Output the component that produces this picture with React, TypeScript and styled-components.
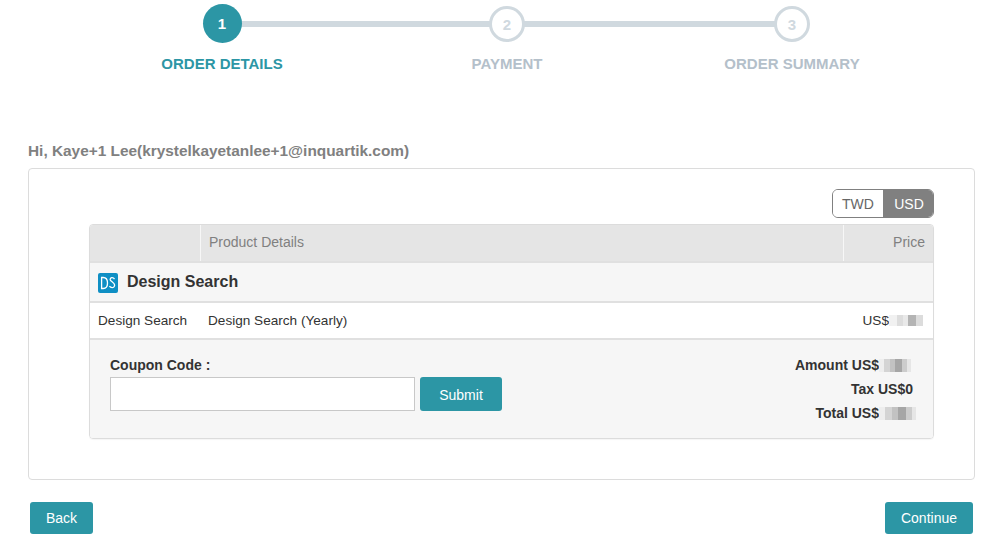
import React from "react";
import styled, { createGlobalStyle } from "styled-components";

const steps = ["ORDER DETAILS", "PAYMENT", "ORDER SUMMARY"];

const App: React.FC = () => {
  return (
    <Root>
      <GlobalStyle />
      <Stepper>
        {steps.map((name, index) => (
          <Step key={name} $last={index === steps.length - 1}>
            <CircleSlot>
              <Circle $active={index === 0}>{index + 1}</Circle>
            </CircleSlot>
            <StepName $active={index === 0}>{name}</StepName>
          </Step>
        ))}
      </Stepper>
      <Greeting>Hi, Kaye+1 Lee(krystelkayetanlee+1@inquartik.com)</Greeting>
      <Card>
        <CurrencyRow>
          <Currency>
            <CurrencyOption>TWD</CurrencyOption>
            <CurrencyOption $selected>USD</CurrencyOption>
          </Currency>
        </CurrencyRow>
        <Table>
          <HeadRow>
            <HeadCell $width={110} />
            <HeadCell $grow>Product Details</HeadCell>
            <HeadCell $width={90} $right>
              Price
            </HeadCell>
          </HeadRow>
          <ProductRow>
            <DsLogo viewBox="0 0 20 20">
              <rect width="20" height="20" rx="2" fill="#0f8fc4" />
              <path
                d="M3.600 4.500v11h1.600c3 0 4.300-2.400 4.300-5.500s-1.300-5.500-4.300-5.500z"
                fill="none"
                stroke="#fff"
                strokeWidth="1.300"
              />
              <path
                d="M16.500 6.200c-.6-1-1.500-1.600-2.600-1.500-1.200.1-1.900 1-1.700 2.100.3 1.500 4.300 3 4.400 5.200.1 1.600-1 2.600-2.500 2.600-1.100 0-2-.5-2.700-1.400"
                fill="none"
                stroke="#fff"
                strokeWidth="1.300"
              />
            </DsLogo>
            <ProductTitle>Design Search</ProductTitle>
          </ProductRow>
          <ItemRow>
            <ItemName>Design Search</ItemName>
            <ItemPlan>Design Search (Yearly)</ItemPlan>
            <ItemPrice>
              US$
              <Blur $width={34} />
            </ItemPrice>
          </ItemRow>
          <Footer>
            <Coupon>
              <CouponLabel>Coupon Code :</CouponLabel>
              <CouponForm>
                <CouponInput />
                <SubmitButton>Submit</SubmitButton>
              </CouponForm>
            </Coupon>
            <Totals>
              <TotalLine $shift={22}>
                Amount US$
                <Blur $width={32} $dark />
              </TotalLine>
              <TotalLine $shift={20}>Tax US$0</TotalLine>
              <TotalLine $shift={17}>
                Total US$
                <Blur $width={37} $dark />
              </TotalLine>
            </Totals>
          </Footer>
        </Table>
      </Card>
      <Actions>
        <ActionButton $width={63}>Back</ActionButton>
        <ActionButton $width={88}>Continue</ActionButton>
      </Actions>
    </Root>
  );
};

export default App;

const GlobalStyle = createGlobalStyle`
  html, body {
    margin: 0;
    padding: 0;
    background: #fff;
    font-family: "Liberation Sans", Arial, sans-serif;
  }
  * {
    box-sizing: border-box;
  }
`;

const Root = styled.div`
  width: 995px;
  height: 548px;
  overflow: hidden;
  padding-left: 28px;
  padding-top: 4px;
`;

const Stepper = styled.div`
  display: flex;
  margin-left: 51.5px;
  width: 855px;
`;

const Step = styled.div<{ $last?: boolean }>`
  position: relative;
  width: 285px;
  display: flex;
  flex-direction: column;
  align-items: center;

  &::after {
    content: "";
    display: ${({ $last }) => ($last ? "none" : "block")};
    position: absolute;
    left: 50%;
    width: 100%;
    top: 17px;
    height: 6px;
    background: #d0d9df;
  }
`;

const CircleSlot = styled.div`
  height: 40px;
  display: flex;
  align-items: center;
  position: relative;
  z-index: 1;
`;

const Circle = styled.div<{ $active?: boolean }>`
  width: ${({ $active }) => ($active ? "39px" : "36px")};
  height: ${({ $active }) => ($active ? "39px" : "36px")};
  margin-top: ${({ $active }) => ($active ? "-1px" : "0")};
  border-radius: 50%;
  display: flex;
  align-items: center;
  justify-content: center;
  font-size: 15px;
  font-weight: 700;
  color: ${({ $active }) => ($active ? "#fff" : "#d0d9df")};
  background: ${({ $active }) => ($active ? "#2c96a5" : "#fff")};
  border: ${({ $active }) => ($active ? "none" : "3px solid #d0d9df")};
`;

const StepName = styled.div<{ $active?: boolean }>`
  margin-top: 11px;
  font-size: 15px;
  line-height: 18px;
  font-weight: 700;
  white-space: nowrap;
  color: ${({ $active }) => ($active ? "#2c96a5" : "#b4c0ca")};
`;

const Greeting = styled.div`
  margin-top: 69px;
  font-size: 15.4px;
  line-height: 18px;
  font-weight: 700;
  color: #808080;
`;

const Card = styled.div`
  margin-top: 8px;
  width: 947px;
  height: 312px;
  padding: 20px 40px 0 60px;
  border: 1px solid #dcdcdc;
  border-radius: 4px;
`;

const CurrencyRow = styled.div`
  display: flex;
  justify-content: flex-end;
`;

const Currency = styled.div`
  display: flex;
  height: 29px;
  border: 1px solid #808080;
  border-radius: 6px;
  overflow: hidden;
`;

const CurrencyOption = styled.div<{ $selected?: boolean }>`
  width: 50px;
  display: flex;
  align-items: center;
  justify-content: center;
  padding-left: ${({ $selected }) => ($selected ? "2px" : "0")};
  font-size: 14px;
  color: ${({ $selected }) => ($selected ? "#fff" : "#666")};
  background: ${({ $selected }) => ($selected ? "#808080" : "#fff")};
`;

const Table = styled.div`
  margin-top: 6px;
  width: 845px;
  border: 1px solid #dcdcdc;
  border-radius: 4px;
  overflow: hidden;
  box-shadow: 0 1px 1px rgba(0, 0, 0, 0.04);
`;

const HeadRow = styled.div`
  display: flex;
  height: 36px;
  background: #e5e5e5;
`;

const HeadCell = styled.div<{ $width?: number; $grow?: boolean; $right?: boolean }>`
  width: ${({ $width }) => ($width ? `${$width}px` : "auto")};
  flex: ${({ $grow }) => ($grow ? 1 : "none")};
  display: flex;
  align-items: center;
  justify-content: ${({ $right }) => ($right ? "flex-end" : "flex-start")};
  padding: 0 8px 2px;
  font-size: 14px;
  color: #808080;
  border-left: ${({ $width, $right }) => ($width && !$right ? "none" : "1px solid #f7f7f7")};
`;

const ProductRow = styled.div`
  display: flex;
  align-items: center;
  gap: 9px;
  height: 42px;
  padding-left: 8px;
  background: #f6f6f6;
  border-top: 2px solid #e0e0e0;
  border-bottom: 2px solid #e0e0e0;
`;

const DsLogo = styled.svg`
  width: 20px;
  height: 20px;
  flex: none;
  margin-top: 2px;
`;

const ProductTitle = styled.div`
  font-size: 16px;
  font-weight: 700;
  color: #333;
`;

const ItemRow = styled.div`
  display: flex;
  align-items: center;
  height: 35px;
  padding: 0 10px 0 8px;
  background: #fff;
  font-size: 13.6px;
  line-height: 16px;
  color: #333;
`;

const ItemName = styled.div`
  width: 110px;
`;

const ItemPlan = styled.div`
  flex: 1;
`;

const ItemPrice = styled.div`
  display: flex;
  align-items: center;
`;

// pixelated patch that hides a price in the screenshot
const Blur = styled.span<{ $width: number; $dark?: boolean }>`
  display: inline-block;
  width: ${({ $width }) => $width}px;
  height: ${({ $dark }) => ($dark ? "13px" : "11px")};
  background: ${({ $dark }) =>
    $dark
      ? "linear-gradient(90deg, #eeeeee 0 16%, #d4d4d4 16% 34%, #c2c2c2 34% 50%, #a6a6a6 50% 72%, #cccccc 72% 88%, #e6e6e6 88% 100%)"
      : "linear-gradient(90deg, #f1f1f1 0 25%, #dddddd 25% 40%, #e9e9e9 40% 55%, #b4b4b4 55% 80%, #dcdcdc 80% 100%)"};
`;

const Footer = styled.div`
  display: flex;
  justify-content: space-between;
  height: 100px;
  padding: 17px 0 0 20px;
  background: #f6f6f6;
  border-top: 2px solid #e0e0e0;
`;

const Coupon = styled.div`
  display: flex;
  flex-direction: column;
`;

const CouponLabel = styled.div`
  font-size: 14px;
  line-height: 16px;
  font-weight: 700;
  color: #333;
`;

const CouponForm = styled.div`
  display: flex;
  gap: 5px;
  margin-top: 4px;
`;

const CouponInput = styled.input`
  width: 305px;
  height: 34px;
  padding: 0 8px;
  background: #fff;
  border: 1px solid #c8c8c8;
  outline: none;
`;

const SubmitButton = styled.button`
  width: 82px;
  height: 34px;
  padding: 2px 0 0;
  border: none;
  border-radius: 3px;
  background: #2c96a5;
  color: #fff;
  font-family: inherit;
  font-size: 14px;
`;

const Totals = styled.div`
  display: flex;
  flex-direction: column;
  align-items: flex-end;
  gap: 8px;
`;

const TotalLine = styled.div<{ $shift: number }>`
  display: flex;
  align-items: center;
  margin-right: ${({ $shift }) => $shift}px;
  font-size: 14px;
  line-height: 16px;
  font-weight: 700;
  color: #333;
`;

const Actions = styled.div`
  display: flex;
  justify-content: space-between;
  width: 943px;
  margin: 22px 0 0 2px;
`;

const ActionButton = styled.button<{ $width: number }>`
  width: ${({ $width }) => $width}px;
  height: 32px;
  padding: 0;
  border: none;
  border-radius: 3px;
  background: #2c96a5;
  color: #fff;
  font-family: inherit;
  font-size: 14px;
`;
